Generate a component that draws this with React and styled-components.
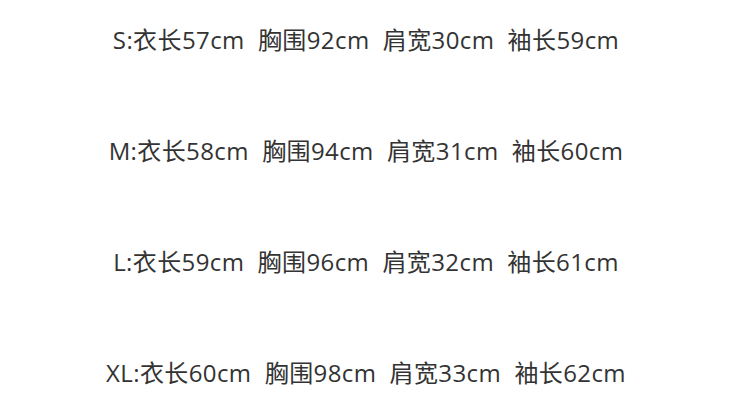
import React from "react";
import styled, { createGlobalStyle } from "styled-components";

const GlobalStyle = createGlobalStyle`
  html, body {
    margin: 0;
    padding: 0;
    background: #ffffff;
  }
`;

const Page = styled.div`
  width: 732px;
  height: 418px;
  display: flex;
  flex-direction: column;
  align-items: center;
  gap: 79px;
  padding-top: 24px;
  box-sizing: border-box;
  overflow: hidden;
`;

const SizeRow = styled.div`
  height: 32px;
  line-height: 32px;
  font-family: "Open Sans", "Noto Sans CJK SC", sans-serif;
  font-size: 24px;
  letter-spacing: 0.4px;
  color: #333333;
  white-space: pre;
  text-align: center;
`;

const sizes = [
  { name: "S", len: 57, chest: 92, shoulder: 30, sleeve: 59 },
  { name: "M", len: 58, chest: 94, shoulder: 31, sleeve: 60 },
  { name: "L", len: 59, chest: 96, shoulder: 32, sleeve: 61 },
  { name: "XL", len: 60, chest: 98, shoulder: 33, sleeve: 62 },
];

const App = () => {
  return (
    <>
      <GlobalStyle />
      <Page>
        {sizes.map((s) => (
          <SizeRow key={s.name}>
            {`${s.name}:衣长${s.len}cm  胸围${s.chest}cm  肩宽${s.shoulder}cm  袖长${s.sleeve}cm`}
          </SizeRow>
        ))}
      </Page>
    </>
  );
};

export default App;
